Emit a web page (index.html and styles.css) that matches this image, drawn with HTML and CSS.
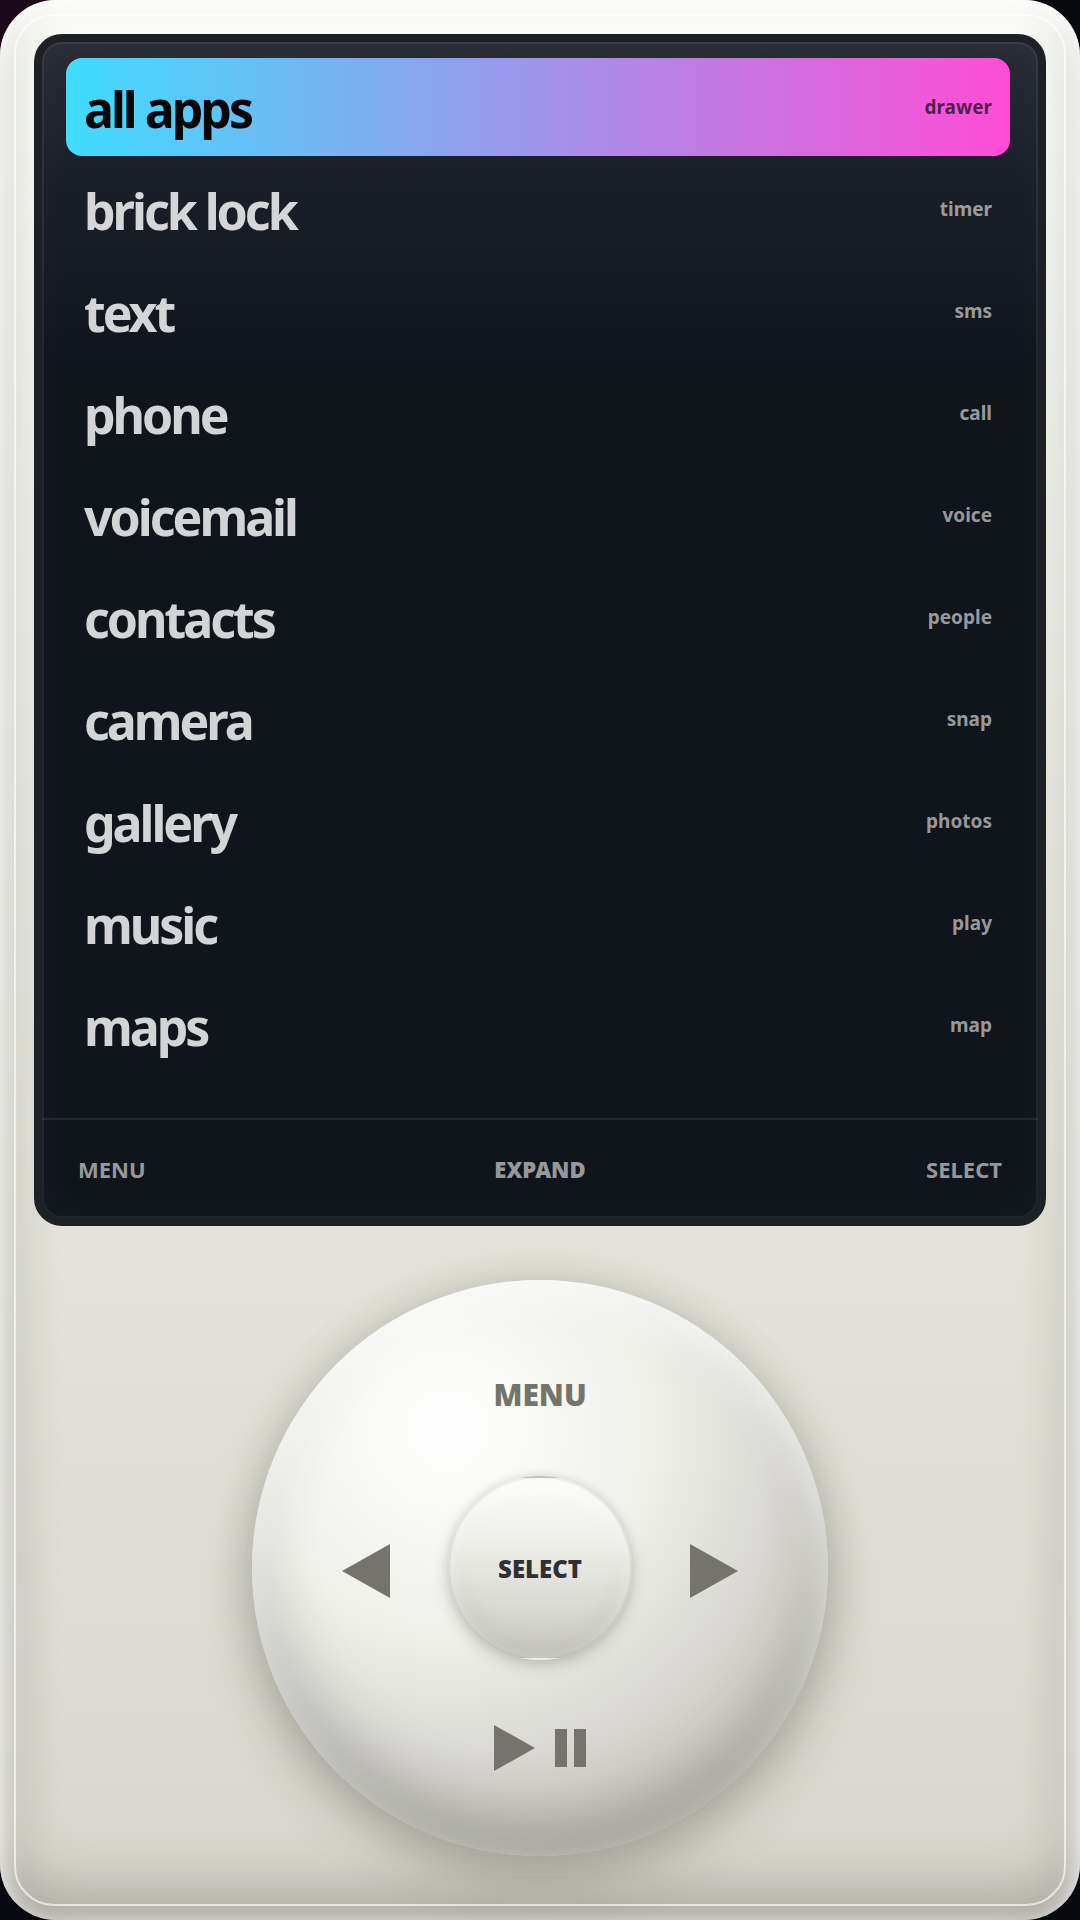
FILE: index.html
```html
<!DOCTYPE html>
<html lang="en">
<head>
  <meta charset="UTF-8">
  <meta name="viewport" content="width=device-width, initial-scale=1">
  <title>Launcher</title>
  <link rel="stylesheet" href="styles.css">
</head>
<body>
  <main class="device">
    <section class="screen">
      <nav class="menu">
        <button class="row selected"><span class="name">all apps</span><span class="meta">drawer</span></button>
        <button class="row"><span class="name">brick lock</span><span class="meta">timer</span></button>
        <button class="row"><span class="name">text</span><span class="meta">sms</span></button>
        <button class="row"><span class="name">phone</span><span class="meta">call</span></button>
        <button class="row"><span class="name">voicemail</span><span class="meta">voice</span></button>
        <button class="row"><span class="name">contacts</span><span class="meta">people</span></button>
        <button class="row"><span class="name">camera</span><span class="meta">snap</span></button>
        <button class="row"><span class="name">gallery</span><span class="meta">photos</span></button>
        <button class="row"><span class="name">music</span><span class="meta">play</span></button>
        <button class="row"><span class="name">maps</span><span class="meta">map</span></button>
      </nav>
      <footer class="softkeys">
        <span>MENU</span>
        <button class="expand">EXPAND</button>
        <span>SELECT</span>
      </footer>
    </section>

    <section class="wheel">
      <button class="key key-menu">MENU</button>
      <button class="key key-prev" aria-label="Previous">
        <svg width="48" height="54" viewBox="0 0 48 54"><path d="M48 0v54L0 27z"/></svg>
      </button>
      <button class="center">SELECT</button>
      <button class="key key-next" aria-label="Next">
        <svg width="48" height="54" viewBox="0 0 48 54"><path d="M0 0v54l48-27z"/></svg>
      </button>
      <button class="key key-play" aria-label="Play or pause">
        <svg width="92" height="46" viewBox="0 0 92 46"><path d="M0 0v46l41-23zM61 4h12v38H61zM80 4h12v38H80z"/></svg>
      </button>
    </section>
  </main>
</body>
</html>
```
FILE: styles.css
```css
* {
  box-sizing: border-box;
}

body {
  margin: 0;
  font-family: "Segoe UI", "Noto Sans", "Open Sans", sans-serif;
  background: radial-gradient(circle at 0 0, #1c0818, #07090e 40%);
}

button {
  margin: 0;
  padding: 0;
  border: 0;
  background: none;
  color: inherit;
  font: inherit;
  cursor: pointer;
}

.device {
  position: relative;
  display: flex;
  flex-direction: column;
  align-items: center;
  gap: 54px;
  min-height: 100vh;
  padding: 34px 34px 64px;
  border-radius: 56px;
  background: linear-gradient(180deg, #fdfffa 0%, #e4e4dc 62%, #d8d5ce 100%);
  box-shadow:
    inset 0 0 16px rgba(255, 255, 255, 0.5),
    inset 0 20px 32px rgba(255, 255, 255, 0.8),
    inset 0 -30px 60px rgba(60, 60, 50, 0.24),
    inset 0 0 60px rgba(60, 60, 50, 0.12);
}

/* thin bevel line around the shell */
.device::before {
  content: "";
  position: absolute;
  inset: 14px;
  border: 2px solid rgba(255, 255, 255, 0.65);
  border-radius: 40px;
  pointer-events: none;
}

.screen {
  position: relative;
  display: flex;
  flex: 1;
  flex-direction: column;
  width: 100%;
  border: 8px solid #1d2125;
  border-radius: 28px;
  background: linear-gradient(180deg, #272b33 0%, #1a1e26 12%, #10141b 28%);
  color: #fff;
  font-weight: 700;
}

.screen::after {
  content: "";
  position: absolute;
  inset: 0;
  border: 2px solid rgba(255, 255, 255, 0.08);
  border-radius: 20px;
  box-shadow: inset 0 0 40px rgba(255, 255, 255, 0.03);
  pointer-events: none;
}

.menu {
  display: flex;
  flex-direction: column;
  gap: 4px;
  padding: 16px 28px 16px 24px;
}

.row {
  display: flex;
  align-items: center;
  justify-content: space-between;
  height: 98px;
  padding: 0 18px;
  border-radius: 16px;
}

.name {
  padding-top: 4px;
  color: rgba(255, 255, 255, 0.82);
  font-size: 50px;
  line-height: 60px;
  letter-spacing: -3px;
}

.meta {
  color: rgba(255, 255, 255, 0.58);
  font-size: 19px;
}

.selected {
  background: linear-gradient(90deg, #40dcff, #ff4cd6);
}

.selected .name {
  color: #050608;
}

.selected .meta {
  color: rgba(5, 6, 8, 0.7);
}

.softkeys {
  display: grid;
  grid-template-columns: 1fr auto 1fr;
  align-items: center;
  height: 100px;
  margin-top: auto;
  padding: 0 36px;
  border-top: 2px solid rgba(255, 255, 255, 0.08);
  color: rgba(255, 255, 255, 0.58);
  font-size: 22px;
}

.softkeys span:last-child {
  text-align: right;
}

.expand {
  font-weight: 900;
}

.wheel {
  display: grid;
  grid-template-columns: 1fr 184px 1fr;
  grid-template-rows: 1fr 184px 1fr;
  place-items: center;
  width: 576px;
  max-width: 100%;
  aspect-ratio: 1;
  border-radius: 50%;
  background: radial-gradient(circle at 34% 26%, #fff 0%, #eff0ea 36%, #d9d8d4 58%, #c5c4bb 80%);
  box-shadow:
    0 24px 52px rgba(50, 50, 40, 0.25),
    0 0 40px rgba(50, 50, 40, 0.14),
    inset 0 16px 40px rgba(255, 255, 255, 0.8),
    inset 0 -36px 60px rgba(50, 50, 46, 0.28);
  color: #74736c;
  font-weight: 900;
}

.key {
  display: flex;
  align-items: center;
  justify-content: center;
  font-size: 30px;
}

.key svg {
  fill: currentColor;
}

.key-menu {
  grid-area: 1 / 2;
  padding-top: 32px;
}

.key-prev {
  grid-area: 2 / 1;
  padding: 6px 0 0 32px;
}

.key-next {
  grid-area: 2 / 3;
  padding: 6px 32px 0 0;
}

.key-play {
  grid-area: 3 / 2;
  padding-bottom: 20px;
}

.center {
  grid-area: 2 / 2;
  width: 184px;
  height: 184px;
  border: 2px solid rgba(90, 90, 80, 0.08);
  border-radius: 50%;
  background: linear-gradient(180deg, #fbfbf9, #ecece7 40%, #c9c8c3);
  box-shadow:
    0 6px 16px rgba(50, 50, 40, 0.2),
    0 0 8px rgba(50, 50, 40, 0.1),
    inset 0 8px 20px rgba(255, 255, 255, 0.6),
    inset 0 -12px 24px rgba(50, 50, 40, 0.08);
  color: #303032;
  font-size: 24px;
}
```
